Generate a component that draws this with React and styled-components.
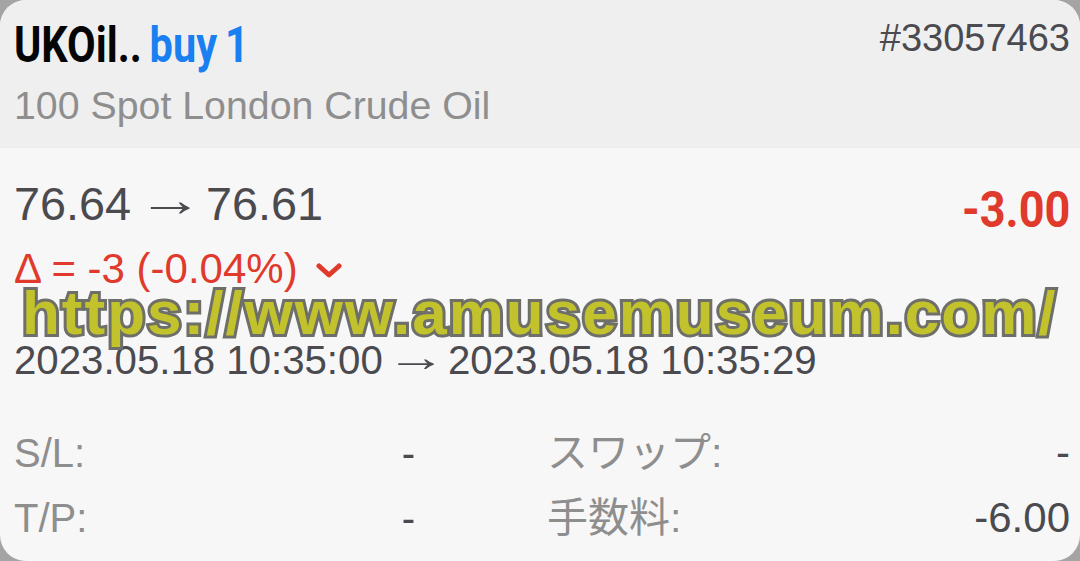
import React from "react";
import styled, { createGlobalStyle } from "styled-components";

const Global = createGlobalStyle`
  html, body { margin: 0; padding: 0; background: #a4a4a4; }
  body { font-family: "Liberation Sans", Arial, sans-serif; }
  * { box-sizing: border-box; }
`;

const Card = styled.div`
  position: relative;
  width: 1080px;
  height: 561px;
  overflow: hidden;
  border-radius: 26px;
  background: #f7f7f7;
`;

const Header = styled.header`
  background: #efefef;
  padding: 15px 10px 20px 14px;
  border-bottom: 1px solid #ebebeb;
`;

const TitleRow = styled.div`
  display: flex;
  justify-content: space-between;
  align-items: flex-start;
`;

const Title = styled.h1`
  margin: 0;
  font-family: Roboto, "Liberation Sans", sans-serif;
  font-weight: 700;
  font-size: 50px;
  line-height: 60px;
  color: #050505;
  display: inline-block;
  transform: scaleX(0.83);
  transform-origin: left center;
  white-space: nowrap;
  word-spacing: -3px;
`;

const Side = styled.span`
  color: #1a7ff0;
`;

const Ticket = styled.div`
  font-size: 38px;
  line-height: 44px;
  color: #4a4a4f;
  margin-top: 1px;
`;

const Subtitle = styled.div`
  margin-top: 8px;
  font-size: 39.3px;
  line-height: 44px;
  color: #8e8e8e;
`;

const Body = styled.section`
  padding: 29px 10px 0 14px;
`;

const PriceRow = styled.div`
  display: flex;
  justify-content: space-between;
  align-items: flex-start;
`;

const Prices = styled.div`
  font-size: 46.8px;
  line-height: 54px;
  color: #4a4a4f;
  white-space: nowrap;
`;

const Arrow = styled.span`
  display: inline-block;
  transform: translateY(${(p) => p.$lift}px) scaleX(${(p) => p.$stretch});
  margin: 0 ${(p) => p.$right}px 0 ${(p) => p.$left}px;
`;

const Profit = styled.div`
  font-family: Roboto, "Liberation Sans", sans-serif;
  font-weight: 700;
  font-size: 50px;
  line-height: 54px;
  margin-top: 6px;
  color: #e03a2c;
  transform: scaleX(0.9);
  transform-origin: right center;
`;

const Delta = styled.div`
  margin-top: 9px;
  display: flex;
  align-items: center;
  gap: 18px;
  font-size: 42px;
  line-height: 46px;
  color: #e03a2c;
`;

const Chevron = styled.svg`
  width: 26px;
  height: 16px;
  margin-top: 4px;
`;

const Dates = styled.div`
  margin-top: 47px;
  font-size: 40.2px;
  line-height: 44px;
  color: #4a4a4f;
  white-space: nowrap;
`;

const Grid = styled.div`
  margin-top: 48px;
  display: grid;
  grid-template-columns: 401px 1fr;
  column-gap: 132px;
  row-gap: 21px;
`;

const Cell = styled.div`
  display: flex;
  justify-content: space-between;
  font-size: 40px;
  line-height: 44px;
`;

const Label = styled.span`
  color: #8e8e8e;
  font-family: "Liberation Sans", "Noto Sans CJK JP", sans-serif;
  font-size: ${(p) => (p.$cjk ? "41px" : "inherit")};
`;

const Value = styled.span`
  color: #4a4a4f;
  font-size: ${(p) => (p.$wide ? "42px" : "inherit")};
`;

const Watermark = styled.div`
  position: absolute;
  left: 22px;
  top: 282px;
  font-family: "Liberation Sans", Arial, sans-serif;
  font-weight: 700;
  font-size: 62px;
  line-height: 62px;
  letter-spacing: 2px;
  color: #c2c22c;
  -webkit-text-stroke: 6px #6f6f6a;
  paint-order: stroke fill;
  white-space: nowrap;
  pointer-events: none;
`;

const rows = [
  ["S/L:", "-", "スワップ:", "-"],
  ["T/P:", "-", "手数料:", "-6.00"],
];

export default function App() {
  return (
    <>
      <Global />
      <Card>
        <Header>
          <TitleRow>
            <Title>
              UKOil.. <Side>buy 1</Side>
            </Title>
            <Ticket>#33057463</Ticket>
          </TitleRow>
          <Subtitle>100 Spot London Crude Oil</Subtitle>
        </Header>
        <Body>
          <PriceRow>
            <Prices>
              76.64<Arrow $stretch={1.4} $lift={-4} $left={16} $right={12}>→</Arrow>76.61
            </Prices>
            <Profit>-3.00</Profit>
          </PriceRow>
          <Delta>
            <span>Δ = -3 (-0.04%)</span>
            <Chevron viewBox="0 0 26 16">
              <polyline
                points="3,3 13,12 23,3"
                fill="none"
                stroke="#e03a2c"
                strokeWidth="5"
                strokeLinecap="round"
                strokeLinejoin="round"
              />
            </Chevron>
          </Delta>
          <Dates>
            2023.05.18 10:35:00<Arrow $stretch={1.5} $lift={-3} $left={13} $right={12}>→</Arrow>2023.05.18 10:35:29
          </Dates>
          <Grid>
            {rows.map((r, i) => (
              <React.Fragment key={i}>
                <Cell>
                  <Label>{r[0]}</Label>
                  <Value>{r[1]}</Value>
                </Cell>
                <Cell>
                  <Label $cjk>{r[2]}</Label>
                  <Value $wide>{r[3]}</Value>
                </Cell>
              </React.Fragment>
            ))}
          </Grid>
        </Body>
        <Watermark>https://www.amusemuseum.com/</Watermark>
      </Card>
    </>
  );
}
